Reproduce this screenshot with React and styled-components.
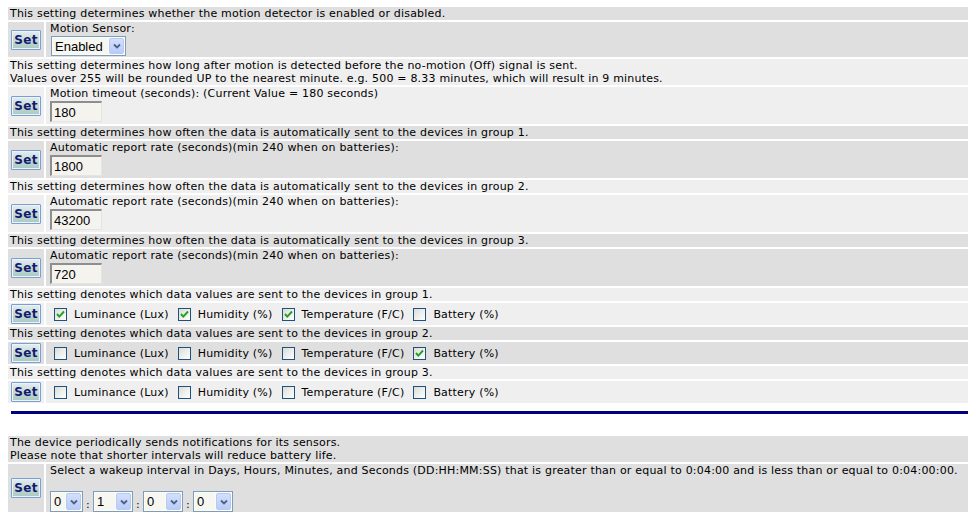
import React from "react";
import styled, { createGlobalStyle } from "styled-components";

const Global = createGlobalStyle`
  html, body { background: #fff; }
  body {
    margin: 7px 8px 8px 8px;
    font-family: "DejaVu Sans", Verdana, sans-serif;
    font-size: 11px;
    line-height: 13px;
    letter-spacing: 0.2px;
    color: #000;
  }
`;

const tone = (p) => (p.$tone === "dark" ? "#dfdfdf" : "#efefef");

const Table = styled.div`
  width: 963px;
  display: flex;
  flex-direction: column;
  gap: 2px;
`;

const Desc = styled.div`
  background: ${tone};
  padding: 0 2px;
  white-space: nowrap;
`;

const SetRow = styled.div`
  display: grid;
  grid-template-columns: 36px 1fr;
  column-gap: 2px;
  height: ${(p) => p.$h}px;
`;

const SetCell = styled.div`
  background: ${tone};
  display: flex;
  align-items: center;
  justify-content: center;
`;

const SetButton = styled.button`
  width: 30px;
  height: 20px;
  padding: 0;
  margin: 0;
  border: 1px solid #78a0d6;
  border-radius: 1px;
  box-shadow: inset 0 0 0 1px #eef4f5;
  background: linear-gradient(#e4edf0, #b9d3cf 70%, #a9c8c2);
  font-family: "DejaVu Sans", Verdana, sans-serif;
  font-weight: bold;
  font-size: 12px;
  line-height: 16px;
  letter-spacing: 0.3px;
  color: #141a6e;
`;

const Content = styled.div`
  background: ${tone};
  padding: 0 4px;
  display: flex;
  flex-direction: ${(p) => (p.$row ? "row" : "column")};
  align-items: ${(p) => (p.$row ? "center" : "flex-start")};
  white-space: nowrap;
`;

const Label = styled.div`
  height: 13px;
`;

const Spacer = styled.div`
  height: 13px;
`;

const SelectBox = styled.div`
  box-sizing: border-box;
  display: inline-flex;
  align-items: stretch;
  width: ${(p) => p.$w}px;
  height: ${(p) => p.$h}px;
  margin-top: 1px;
  margin-left: ${(p) => p.$ml || 0}px;
  border: 1px solid #7f9db9;
  background: #fbfbf8;
  padding: 1px;
  gap: 1px;
  letter-spacing: 0;
`;

const SelectText = styled.span`
  flex: 1;
  display: flex;
  align-items: center;
  padding-left: 2px;
  font-family: "Liberation Sans", Arial, sans-serif;
  font-size: 13px;
  background: #f7f7f2;
`;

const SelectArrow = styled.span`
  box-sizing: border-box;
  width: 15px;
  border: 1px solid #b8caf3;
  border-radius: 2px;
  background: linear-gradient(#d3dffd, #b9ccf8);
  display: flex;
  align-items: center;
  justify-content: center;
`;

const TextBox = styled.input`
  box-sizing: border-box;
  width: 52px;
  height: 21px;
  margin: 1px 0 0 0;
  border-style: solid;
  border-width: 2px 1px 1px 2px;
  border-color: #8e8e8e #e4e4e4 #e4e4e4 #8e8e8e;
  background: #f4f3ee;
  padding: 0 2px;
  font-family: "Liberation Sans", Arial, sans-serif;
  font-size: 13px;
  color: #000;
  outline: none;
`;

const Checks = styled.div`
  display: flex;
  align-items: center;
  gap: 9px;
  padding-left: 4px;
`;

const CheckItem = styled.label`
  display: inline-flex;
  align-items: center;
  gap: 7px;
`;

const Box = styled.span`
  box-sizing: border-box;
  width: 13px;
  height: 13px;
  border: 1px solid #1c5180;
  background: linear-gradient(135deg, #dcdcd6, #ffffff);
  display: inline-flex;
  align-items: center;
  justify-content: center;
`;

const Rule = styled.div`
  height: 3px;
  margin: 8px 3px 22px 3px;
  width: 957px;
  background: #000080;
`;

const TimeRow = styled.div`
  display: flex;
  align-items: flex-end;
`;

const Colon = styled.span`
  width: 10px;
  text-align: center;
  line-height: 13px;
  padding-bottom: 1px;
`;

const Chevron = () => (
  <svg width="8" height="6" viewBox="0 0 8 6">
    <polyline points="1,1.5 4,4.5 7,1.5" fill="none" stroke="#4d6185" strokeWidth="1.8" />
  </svg>
);

const Check = () => (
  <svg width="9" height="9" viewBox="0 0 9 9">
    <polyline points="1,4 3.3,6.6 8,1.5" fill="none" stroke="#21a121" strokeWidth="1.9" />
  </svg>
);

const FakeSelect = ({ value, w, h = 20, ml }) => (
  <SelectBox $w={w} $h={h} $ml={ml}>
    <SelectText>{value}</SelectText>
    <SelectArrow>
      <Chevron />
    </SelectArrow>
  </SelectBox>
);

const checkLabels = ["Luminance (Lux)", "Humidity (%)", "Temperature (F/C)", "Battery (%)"];

const groups = [
  {
    tone: "dark",
    desc: ["This setting determines whether the motion detector is enabled or disabled."],
    kind: "select",
    label: "Motion Sensor:",
    value: "Enabled",
  },
  {
    tone: "light",
    desc: [
      "This setting determines how long after motion is detected before the no-motion (Off) signal is sent.",
      "Values over 255 will be rounded UP to the nearest minute. e.g. 500 = 8.33 minutes, which will result in 9 minutes.",
    ],
    kind: "input",
    label: "Motion timeout (seconds): (Current Value = 180 seconds)",
    value: "180",
  },
  {
    tone: "dark",
    desc: ["This setting determines how often the data is automatically sent to the devices in group 1."],
    kind: "input",
    label: "Automatic report rate (seconds)(min 240 when on batteries):",
    value: "1800",
  },
  {
    tone: "light",
    desc: ["This setting determines how often the data is automatically sent to the devices in group 2."],
    kind: "input",
    label: "Automatic report rate (seconds)(min 240 when on batteries):",
    value: "43200",
  },
  {
    tone: "dark",
    desc: ["This setting determines how often the data is automatically sent to the devices in group 3."],
    kind: "input",
    label: "Automatic report rate (seconds)(min 240 when on batteries):",
    value: "720",
  },
  {
    tone: "light",
    desc: ["This setting denotes which data values are sent to the devices in group 1."],
    kind: "checks",
    checks: [true, true, true, false],
  },
  {
    tone: "dark",
    desc: ["This setting denotes which data values are sent to the devices in group 2."],
    kind: "checks",
    checks: [false, false, false, true],
  },
  {
    tone: "light",
    desc: ["This setting denotes which data values are sent to the devices in group 3."],
    kind: "checks",
    checks: [false, false, false, false],
  },
];

const heights = { select: 35, input: 37, checks: 22 };

const Group = ({ g }) => (
  <>
    <Desc $tone={g.tone}>
      {g.desc.map((d, i) => (
        <div key={i}>{d}</div>
      ))}
    </Desc>
    <SetRow $h={heights[g.kind]}>
      <SetCell $tone={g.tone}>
        <SetButton>Set</SetButton>
      </SetCell>
      {g.kind === "checks" ? (
        <Content $tone={g.tone} $row>
          <Checks>
            {checkLabels.map((l, i) => (
              <CheckItem key={l}>
                <Box>{g.checks[i] && <Check />}</Box>
                {l}
              </CheckItem>
            ))}
          </Checks>
        </Content>
      ) : (
        <Content $tone={g.tone}>
          <Label>{g.label}</Label>
          {g.kind === "select" ? (
            <FakeSelect value={g.value} w={75} ml={1} />
          ) : (
            <TextBox defaultValue={g.value} />
          )}
        </Content>
      )}
    </SetRow>
  </>
);

export default function App() {
  return (
    <>
      <Global />
      <Table>
        {groups.map((g, i) => (
          <Group key={i} g={g} />
        ))}
      </Table>
      <Rule />
      <Table>
        <Desc $tone="dark">
          <div>The device periodically sends notifications for its sensors.</div>
          <div>Please note that shorter intervals will reduce battery life.</div>
        </Desc>
        <SetRow $h={48}>
          <SetCell $tone="dark">
            <SetButton>Set</SetButton>
          </SetCell>
          <Content $tone="dark">
            <Label>
              Select a wakeup interval in Days, Hours, Minutes, and Seconds (DD:HH:MM:SS) that is greater than or
              equal to 0:04:00 and is less than or equal to 0:04:00:00.
            </Label>
            <Spacer />
            <TimeRow>
              <FakeSelect value="0" w={33} h={21} />
              <Colon>:</Colon>
              <FakeSelect value="1" w={40} h={21} />
              <Colon>:</Colon>
              <FakeSelect value="0" w={40} h={21} />
              <Colon>:</Colon>
              <FakeSelect value="0" w={40} h={21} />
            </TimeRow>
          </Content>
        </SetRow>
      </Table>
    </>
  );
}
